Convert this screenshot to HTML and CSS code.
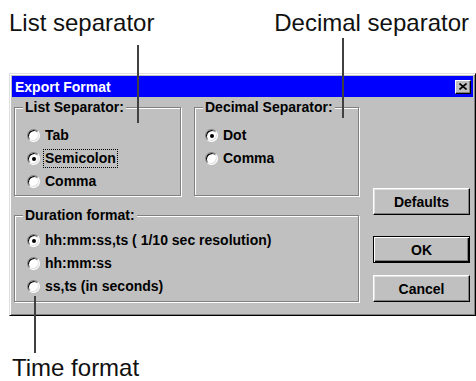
FILE: index.html
```html
<!DOCTYPE html>
<html>
<head>
<meta charset="utf-8">
<link rel="stylesheet" href="styles.css">
</head>
<body>
<div class="page">
  <div class="captions">
    <span class="cap">List separator</span>
    <span class="cap">Decimal separator</span>
  </div>
  <div class="dialog">
    <div class="titlebar">
      <span class="title">Export Format</span>
      <span class="close"><svg width="8" height="7" viewBox="0 0 8 7"><path d="M0.5 0.5 L7.5 6.5 M7.5 0.5 L0.5 6.5" stroke="#000" stroke-width="1.6" fill="none"/></svg></span>
    </div>
    <div class="content">
      <div class="left">
        <div class="row">
          <fieldset class="group">
            <legend>List Separator:</legend>
            <div class="opt"><span class="radio"></span><span>Tab</span></div>
            <div class="opt"><span class="radio checked"></span><span class="focus">Semicolon</span></div>
            <div class="opt"><span class="radio"></span><span>Comma</span></div>
          </fieldset>
          <fieldset class="group group-dec">
            <legend>Decimal Separator:</legend>
            <div class="opt"><span class="radio checked"></span><span>Dot</span></div>
            <div class="opt"><span class="radio"></span><span>Comma</span></div>
          </fieldset>
        </div>
        <fieldset class="group group-dur">
          <legend>Duration format:</legend>
          <div class="opt"><span class="radio checked"></span><span>hh:mm:ss,ts ( 1/10 sec resolution)</span></div>
          <div class="opt"><span class="radio"></span><span>hh:mm:ss</span></div>
          <div class="opt"><span class="radio"></span><span>ss,ts (in seconds)</span></div>
        </fieldset>
      </div>
      <div class="buttons">
        <button class="btn btn-defaults">Defaults</button>
        <button class="btn btn-ok">OK</button>
        <button class="btn">Cancel</button>
      </div>
    </div>
  </div>
  <div class="cap cap-bottom">Time format</div>
  <span class="lead lead-list"></span>
  <span class="lead lead-dec"></span>
  <span class="lead lead-time"></span>
</div>
</body>
</html>
```
FILE: styles.css
```css
* { box-sizing: border-box; }
body { margin: 0; background: #fff; font-family: "Liberation Sans", Arial, sans-serif; }
.page { position: relative; width: 476px; height: 381px; overflow: hidden; }
.captions { display: flex; justify-content: space-between; padding: 10px 7px 0 9px; height: 73px; }
.cap { font-size: 24px; line-height: 26px; color: #111; }
.cap-bottom { margin: 39px 0 0 12px; }

.dialog {
  margin-left: 9px; width: 467px; height: 243px;
  background: #c0c0c0;
  border: 1px solid; border-color: #dfdfdf #000 #000 #dfdfdf;
  box-shadow: inset 1px 1px #fff, inset -1px -1px #808080;
  padding: 2px;
  font: bold 14px "Liberation Sans", Arial, sans-serif;
  color: #000;
}
.titlebar {
  height: 21px; background: #0000ff; color: #fff;
  display: flex; align-items: center; justify-content: space-between;
  padding: 0 2px 0 3px;
}
.close {
  width: 16px; height: 14px; background: #c0c0c0;
  border: 1px solid; border-color: #fff #000 #000 #fff;
  box-shadow: inset -1px -1px #808080;
  display: flex; align-items: center; justify-content: center;
}
.content { display: flex; gap: 14px; padding: 3px 3px 0 2px; }
.left { width: 345px; display: flex; flex-direction: column; gap: 12px; }
.row { display: flex; gap: 13px; }
.group {
  margin: 0; min-width: 0; flex: 1;
  border: 1px solid #808080;
  box-shadow: inset 1px 1px #fff, 1px 1px #fff;
  padding: 9px 0 2px 12px;
}
.group-dec { padding-left: 10px; }
.group-dur { padding: 6px 0 3px 12px; }
legend { padding: 0 2px; margin-left: -4px; line-height: 15px; background: #c0c0c0; }
.group-dec legend { margin-left: -2px; }
.opt { display: flex; align-items: center; gap: 5px; height: 23px; line-height: 15px; white-space: nowrap; }
.radio {
  position: relative; flex: none;
  width: 13px; height: 13px; border-radius: 50%; background: #fff;
  border: 1px solid; border-color: #808080 #fff #fff #808080;
  box-shadow: inset 1px 1px #000, inset -1px -1px #dfdfdf;
}
.radio.checked::after {
  content: ""; position: absolute; left: 3.5px; top: 3.5px;
  width: 4px; height: 4px; border-radius: 50%; background: #000;
}
.focus { border: 1px dotted #000; padding: 1px 1px; margin-left: -2px; }

.buttons { width: 97px; display: flex; flex-direction: column; justify-content: flex-end; }
.btn {
  height: 27px; width: 97px; padding: 0;
  font: inherit; color: #000; background: #c0c0c0;
  border: 1px solid; border-color: #fff #000 #000 #fff;
  box-shadow: inset -1px -1px #808080, inset 1px 1px #dfdfdf;
}
.btn-defaults { margin-bottom: 21px; }
.btn-ok {
  margin-bottom: 12px;
  border: 1px solid #000;
  box-shadow: inset 1px 1px #fff, inset -1px -1px #000, inset -2px -2px #808080;
}

.lead { position: absolute; width: 2px; background: #404040; }
.lead-list { left: 137px; top: 45px; height: 78px; }
.lead-dec { left: 342px; top: 38px; height: 80px; }
.lead-time { left: 34px; top: 296px; height: 57px; }
```
